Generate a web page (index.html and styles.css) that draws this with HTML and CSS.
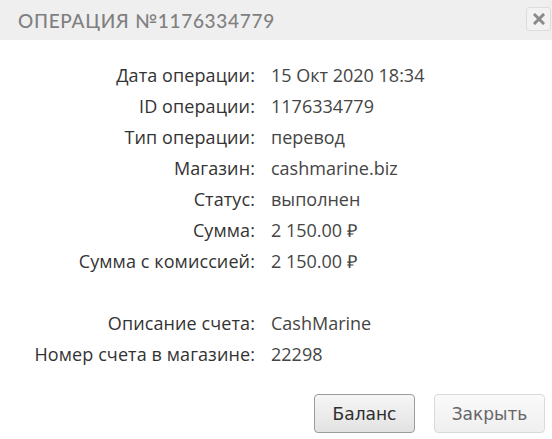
FILE: index.html
```html
<!DOCTYPE html>
<html lang="ru">
<head>
<meta charset="utf-8">
<link rel="stylesheet" href="styles.css">
</head>
<body>
<div class="dialog">
  <div class="header">
    <div class="title">ОПЕРАЦИЯ №1176334779</div>
    <button class="close" aria-label="Закрыть">
      <svg width="12" height="12" viewBox="0 0 12 12"><path d="M2 2 L10 10 M10 2 L2 10" stroke="#8a8a8a" stroke-width="3" stroke-linecap="square"/></svg>
    </button>
  </div>
  <div class="body">
    <div class="info">
      <div class="lbl">Дата операции:</div><div class="val">15 Окт 2020 18:34</div>
      <div class="lbl">ID операции:</div><div class="val">1176334779</div>
      <div class="lbl">Тип операции:</div><div class="val">перевод</div>
      <div class="lbl">Магазин:</div><div class="val">cashmarine.biz</div>
      <div class="lbl">Статус:</div><div class="val">выполнен</div>
      <div class="lbl">Сумма:</div><div class="val">2 150.00 ₽</div>
      <div class="lbl">Сумма с комиссией:</div><div class="val">2 150.00 ₽</div>
      <div class="spacer"></div>
      <div class="lbl">Описание счета:</div><div class="val">CashMarine</div>
      <div class="lbl">Номер счета в магазине:</div><div class="val">22298</div>
    </div>
    <div class="actions">
      <button class="btn btn-primary">Баланс</button>
      <button class="btn btn-light">Закрыть</button>
    </div>
  </div>
</div>
</body>
</html>
```

FILE: styles.css
```css
html, body {
  margin: 0;
  padding: 0;
  background: #fff;
}
.dialog {
  width: 552px;
  height: 439px;
  overflow: hidden;
  font-family: "Open Sans", sans-serif;
}
.header {
  height: 40px;
  background: #efefef;
  display: flex;
  align-items: center;
  justify-content: space-between;
  padding: 0 1px 0 18px;
  box-sizing: border-box;
}
.title {
  font-family: "Lato", sans-serif;
  font-size: 19px;
  letter-spacing: 0.7px;
  color: #808080;
  font-weight: 500;
}
.close {
  width: 25px;
  height: 24px;
  margin-top: -3px;
  border: 1px solid #dcdcdc;
  border-radius: 3px;
  background: #f2f2f2;
  display: flex;
  align-items: center;
  justify-content: center;
  padding: 0;
}
.body {
  padding: 20px 7px 0 0;
}
.info {
  display: grid;
  grid-template-columns: 255px auto;
  column-gap: 16px;
  font-size: 18px;
  line-height: 31px;
  color: #333;
}
.lbl {
  text-align: right;
  letter-spacing: 0.1px;
}
.val {
  color: #454545;
}
.spacer {
  grid-column: 1 / span 2;
  height: 31px;
}
.actions {
  display: flex;
  justify-content: flex-end;
  gap: 19px;
  margin-top: 24px;
}
.btn {
  height: 39px;
  border-radius: 4px;
  font-family: "DejaVu Sans", sans-serif;
  font-size: 17px;
  padding: 0;
}
.btn-primary {
  width: 101px;
  border: 1px solid #9c9c9c;
  background: linear-gradient(#f6f6f6, #e2e2e2);
  color: #2e2e2e;
}
.btn-light {
  width: 111px;
  border: 1px solid #dadada;
  background: linear-gradient(#fafafa, #efefef);
  color: #666;
}
```
